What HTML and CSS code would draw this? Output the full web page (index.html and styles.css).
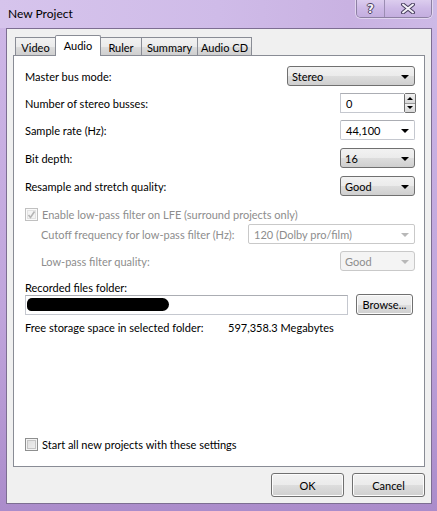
FILE: index.html
```html
<!DOCTYPE html>
<html>
<head>
<meta charset="utf-8">
<link rel="stylesheet" href="styles.css">
</head>
<body>
<div class="window">
  <div class="titlebar">
    <div class="title">New Project</div>
    <div class="caption">
      <div class="cbtn help">?</div>
      <div class="cbtn close">
        <svg width="16" height="11" viewBox="0 0 16 11"><path d="M3 1.5 L13 9.5 M13 1.5 L3 9.5" stroke="#4a4060" stroke-width="4" stroke-linecap="round"/><path d="M3 1.5 L13 9.5 M13 1.5 L3 9.5" stroke="#f4f2f8" stroke-width="2" stroke-linecap="round"/></svg>
      </div>
    </div>
  </div>
  <div class="frame">
    <div class="tabs">
      <div class="tab t-video">Video</div>
      <div class="tab active">Audio</div>
      <div class="tab t-ruler">Ruler</div>
      <div class="tab t-summary">Summary</div>
      <div class="tab t-cd">Audio CD</div>
    </div>
    <div class="panel">
      <div class="row r1">
        <span class="label">Master bus mode:</span>
        <div class="combo ro wide"><span>Stereo</span><i class="arrow"></i></div>
      </div>
      <div class="row r2">
        <span class="label">Number of stereo busses:</span>
        <div class="spin">
          <div class="spin-input">0</div>
          <div class="spin-btns"><div class="sb up"></div><div class="sb down"></div></div>
        </div>
      </div>
      <div class="row r3">
        <span class="label">Sample rate (Hz):</span>
        <div class="combo ed"><span>44,100</span><i class="arrow"></i></div>
      </div>
      <div class="row r4">
        <span class="label">Bit depth:</span>
        <div class="combo ro"><span>16</span><i class="arrow"></i></div>
      </div>
      <div class="row r5">
        <span class="label">Resample and stretch quality:</span>
        <div class="combo ro"><span>Good</span><i class="arrow"></i></div>
      </div>
      <div class="row r6 check disabled">
        <span class="cb checked">
          <svg width="9" height="9" viewBox="0 0 9 9"><path d="M1.5 5 L3.5 7.5 L7.5 1.5" fill="none" stroke="#b4b4b4" stroke-width="1.6"/></svg>
        </span>
        <span>Enable low-pass filter on LFE (surround projects only)</span>
      </div>
      <div class="row r7 disabled indent">
        <span class="label">Cutoff frequency for low-pass filter (Hz):</span>
        <div class="combo ed dis long"><span>120 (Dolby pro/film)</span><i class="arrow"></i></div>
      </div>
      <div class="row r8 disabled indent">
        <span class="label">Low-pass filter quality:</span>
        <div class="combo ro dis"><span>Good</span><i class="arrow"></i></div>
      </div>
      <div class="folder-label">Recorded files folder:</div>
      <div class="row folder">
        <div class="path"><div class="redact"></div></div>
        <div class="btn browse">Browse...</div>
      </div>
      <div class="row storage">
        <span class="s-label">Free storage space in selected folder:</span>
        <span>597,358.3 Megabytes</span>
      </div>
      <div class="row check start">
        <span class="cb"></span>
        <span>Start all new projects with these settings</span>
      </div>
    </div>
    <div class="buttons">
      <div class="btn dlg">OK</div>
      <div class="btn dlg">Cancel</div>
    </div>
  </div>
</div>
</body>
</html>
```
FILE: styles.css
```css
* { box-sizing: border-box; }
html, body { margin: 0; padding: 0; }
body {
  width: 437px;
  height: 511px;
  overflow: hidden;
  font-family: Lato, "Liberation Sans", Arial, sans-serif;
  font-size: 11px;
  color: #000;
  background: #b79bd3;
  white-space: nowrap;
}
.window {
  width: 437px;
  height: 511px;
  background: linear-gradient(180deg, #d8c6ee 0%, #cdb6e6 6%, #c0a5dc 60%, #ab8ccb 100%);
  display: flex;
  flex-direction: column;
}
.titlebar {
  height: 28px;
  display: flex;
  justify-content: space-between;
  align-items: flex-start;
  background: linear-gradient(90deg, #d6c4ec 0%, #cfbbe8 50%, #c9b2e2 80%, #cdb9e6 100%);
}
.title {
  padding: 6px 0 0 8px;
  font-size: 12px;
  color: #000;
}
.caption {
  display: flex;
  margin-right: 5px;
  border: 1px solid #8d80a3;
  border-top: none;
  border-radius: 0 0 5px 5px;
  overflow: hidden;
  box-shadow: 0 0 0 1px rgba(255,255,255,0.45);
}
.cbtn {
  height: 17px;
  display: flex;
  align-items: center;
  justify-content: center;
  background: linear-gradient(180deg, #dccdee 0%, #cdb9e6 50%, #c4aedf 100%);
}
.help {
  width: 28px;
  border-right: 1px solid #9b8db2;
  font-family: "DejaVu Sans", sans-serif;
  font-weight: bold;
  font-size: 12px;
  color: #f4f2f8;
  text-shadow: 1px 0 #4a4060, -1px 0 #4a4060, 0 1px #4a4060, 0 -1px #4a4060;
}
.close { width: 46px; }
.frame {
  flex: 1;
  margin: 0 5px 7px 6px;
  border: 1px solid #7d6e92;
  background: #f0f0f0;
  padding: 5px 6px 0 6px;
  display: flex;
  flex-direction: column;
}
.tabs {
  display: flex;
  height: 21px;
  padding-left: 2px;
  align-items: flex-end;
  position: relative;
  z-index: 1;
}
.tab {
  height: 18px;
  border: 1px solid #898c95;
  border-bottom: none;
  margin-right: -1px;
  background: linear-gradient(180deg, #f2f2f2 0%, #ebebeb 50%, #dddddd 51%, #cfcfcf 100%);
  display: flex;
  align-items: center;
  justify-content: center;
  padding-top: 2px;
}
.t-video { width: 41px; }
.t-ruler { width: 42px; margin-left: -1px; }
.t-summary { width: 57px; }
.t-cd { width: 55px; }
.tab.active {
  height: 21px;
  width: 46px;
  background: #fff;
  margin-bottom: -1px;
  align-items: flex-start;
  padding-top: 3px;
  z-index: 2;
  border-radius: 2px 2px 0 0;
  margin-right: 0;
}
.panel {
  height: 412px;
  border: 1px solid #898c95;
  background: #fff;
  padding: 10px 9px 15px 11px;
  display: flex;
  flex-direction: column;
}
.row {
  display: flex;
  align-items: center;
  justify-content: space-between;
  height: 20px;
}
.r2 { margin-top: 7px; }
.r3 { margin-top: 7px; }
.r4 { margin-top: 8px; }
.r5 { margin-top: 8px; }
.r6 { margin-top: 11px; height: 14px; justify-content: flex-start; }
.r7 { margin-top: 3px; }
.r8 { margin-top: 7px; }
.indent .label { padding-left: 16px; }
.disabled { color: #8d8d8d; }
.combo {
  width: 75px;
  height: 20px;
  display: flex;
  align-items: center;
  justify-content: space-between;
  padding: 0 5px 0 4px;
  border-radius: 3px;
}
.combo.wide { width: 128px; }
.combo.long { width: 167px; padding-left: 7px; }
.combo.ro {
  border: 1px solid #707070;
  background: linear-gradient(180deg, #f2f2f2 0%, #ebebeb 50%, #dddddd 51%, #cfcfcf 100%);
}
.combo.ed {
  border: 1px solid #c5c8cf;
  border-top-color: #abadb3;
  background: #fff;
  border-radius: 2px;
  padding-left: 5px;
}
.combo.ro.dis {
  border-color: #c9c9c9;
  background: #f4f4f4;
}
.combo.ed.dis { border-color: #c9c9c9; }
.arrow {
  width: 0;
  height: 0;
  border-left: 4px solid transparent;
  border-right: 4px solid transparent;
  border-top: 4px solid #000;
  margin-top: 1px;
}
.dis .arrow { border-top-color: #b8b8b8; }
.spin {
  display: flex;
  align-items: stretch;
  height: 20px;
  margin-right: -1px;
}
.spin-input {
  width: 64px;
  border: 1px solid #c5c8cf;
  border-top-color: #abadb3;
  border-right: none;
  background: #fff;
  padding-left: 5px;
  display: flex;
  align-items: center;
}
.spin-btns {
  width: 12px;
  display: flex;
  flex-direction: column;
  border: 1px solid #707070;
  border-radius: 2px;
}
.sb {
  flex: 1;
  display: flex;
  align-items: center;
  justify-content: center;
  background: linear-gradient(180deg, #f2f2f2 0%, #d8d8d8 100%);
}
.sb.up { border-bottom: 1px solid #9a9a9a; }
.sb.up::after {
  content: "";
  border-left: 3px solid transparent;
  border-right: 3px solid transparent;
  border-bottom: 3px solid #000;
}
.sb.down::after {
  content: "";
  border-left: 3px solid transparent;
  border-right: 3px solid transparent;
  border-top: 3px solid #000;
}
.check { justify-content: flex-start; gap: 4px; }
.cb {
  width: 13px;
  height: 13px;
  flex: none;
  border: 1px solid #8e8f8f;
  background: linear-gradient(135deg, #dcdcdc 0%, #f2f2f2 100%);
  box-shadow: inset 0 0 0 1px #f4f4f4, inset 0 0 0 2px #c5c5c5;
  display: flex;
  align-items: center;
  justify-content: center;
}
.cb.checked {
  border-color: #c0c0c0;
  background: #f4f4f4;
  box-shadow: inset 0 0 0 1px #fafafa, inset 0 0 0 2px #e2e2e2;
}
.folder-label { margin-top: 10px; height: 13px; line-height: 13px; }
.folder { margin-top: 0; height: 21px; }
.path {
  width: 323px;
  height: 20px;
  border: 1px solid #c5c8cf;
  border-top-color: #abadb3;
  background: #fff;
  display: flex;
  align-items: center;
  padding-left: 1px;
}
.redact {
  width: 142px;
  height: 13px;
  background: #000;
  border-radius: 7px 9px 9px 6px;
}
.btn {
  display: flex;
  align-items: center;
  justify-content: center;
  border: 1px solid #707070;
  border-radius: 3px;
  background: linear-gradient(180deg, #f2f2f2 0%, #ebebeb 50%, #dddddd 51%, #cfcfcf 100%);
  box-shadow: inset 0 0 0 1px #fcfcfc;
}
.browse { width: 57px; height: 21px; margin-right: 2px; }
.storage { margin-top: 6px; height: 13px; justify-content: flex-start; }
.s-label { width: 203px; flex: none; }
.start { margin-top: auto; height: 14px; }
.buttons {
  display: flex;
  justify-content: flex-end;
  gap: 8px;
  margin-top: 6px;
}
.dlg { width: 73px; height: 24px; }
```
